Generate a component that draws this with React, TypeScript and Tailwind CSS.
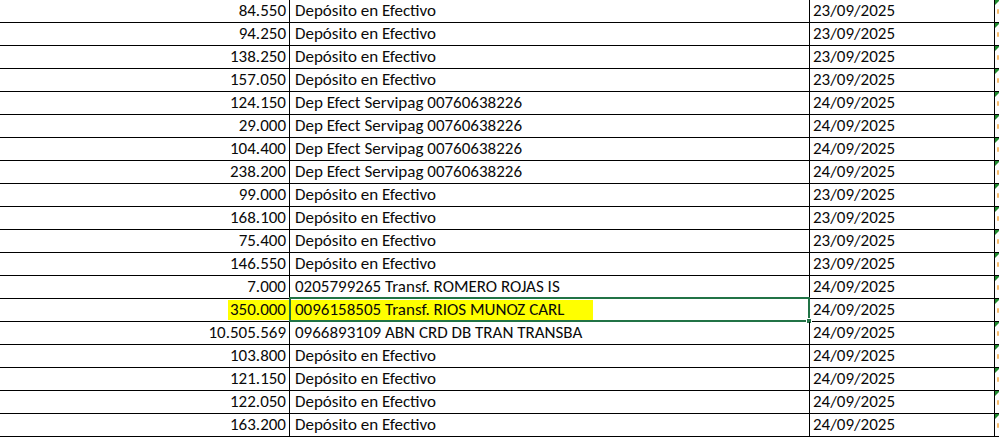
const rows = [
  { amount: "84.550", desc: "Depósito en Efectivo", date: "23/09/2025" },
  { amount: "94.250", desc: "Depósito en Efectivo", date: "23/09/2025" },
  { amount: "138.250", desc: "Depósito en Efectivo", date: "23/09/2025" },
  { amount: "157.050", desc: "Depósito en Efectivo", date: "23/09/2025" },
  { amount: "124.150", desc: "Dep Efect Servipag 00760638226", date: "24/09/2025" },
  { amount: "29.000", desc: "Dep Efect Servipag 00760638226", date: "24/09/2025" },
  { amount: "104.400", desc: "Dep Efect Servipag 00760638226", date: "24/09/2025" },
  { amount: "238.200", desc: "Dep Efect Servipag 00760638226", date: "24/09/2025" },
  { amount: "99.000", desc: "Depósito en Efectivo", date: "23/09/2025" },
  { amount: "168.100", desc: "Depósito en Efectivo", date: "23/09/2025" },
  { amount: "75.400", desc: "Depósito en Efectivo", date: "23/09/2025" },
  { amount: "146.550", desc: "Depósito en Efectivo", date: "23/09/2025" },
  { amount: "7.000", desc: "0205799265 Transf. ROMERO ROJAS IS", date: "24/09/2025" },
  { amount: "350.000", desc: "0096158505 Transf. RIOS MUNOZ CARL", date: "24/09/2025", hl: true },
  { amount: "10.505.569", desc: "0966893109 ABN CRD DB TRAN TRANSBA", date: "24/09/2025" },
  { amount: "103.800", desc: "Depósito en Efectivo", date: "24/09/2025" },
  { amount: "121.150", desc: "Depósito en Efectivo", date: "24/09/2025" },
  { amount: "122.050", desc: "Depósito en Efectivo", date: "24/09/2025" },
  { amount: "163.200", desc: "Depósito en Efectivo", date: "24/09/2025" },
];

export default function App() {
  return (
    <div className="h-[438px] w-[999px] overflow-hidden bg-white text-[17px] text-[#0a0a0a] [font-family:Calibri,Carlito,Lato,sans-serif]">
      {rows.map((r, i) => (
        <div key={i} className="flex h-[23px] border-b border-black leading-[22px]">
          <div className="flex w-[290px] shrink-0 justify-end border-r border-black">
            {r.hl ? (
              <span className="my-auto h-[20px] bg-[#ffff00] pl-[2px] pr-[3px] leading-[20px]">{r.amount}</span>
            ) : (
              <span className="pr-[3px]">{r.amount}</span>
            )}
          </div>
          <div className="relative w-[520px] shrink-0 border-r border-black">
            {r.hl ? (
              <>
                <span className="mt-px inline-block h-[20px] w-[303px] bg-[#ffff00] pl-[5px] leading-[20px]">{r.desc}</span>
                <div className="absolute -top-[2px] -right-px -bottom-px -left-px border-2 border-[#217346]">
                  <div className="absolute -right-[4px] -bottom-[4px] size-[6px] border border-white bg-[#217346]" />
                </div>
              </>
            ) : (
              <span className="pl-[5px]">{r.desc}</span>
            )}
          </div>
          <div className="w-[185px] shrink-0 border-r border-black pl-[3px]">{r.date}</div>
          <div className="relative flex-1">
            <svg width="5" height="5" className="absolute top-0 left-0">
              <polygon points="0,0 5,0 0,5" fill="#1f8a2e" />
            </svg>
            <div className="absolute top-[9px] left-[2px] h-[5px] w-[2px] rounded-full bg-[#f7bd6e]" />
          </div>
        </div>
      ))}
    </div>
  );
}
